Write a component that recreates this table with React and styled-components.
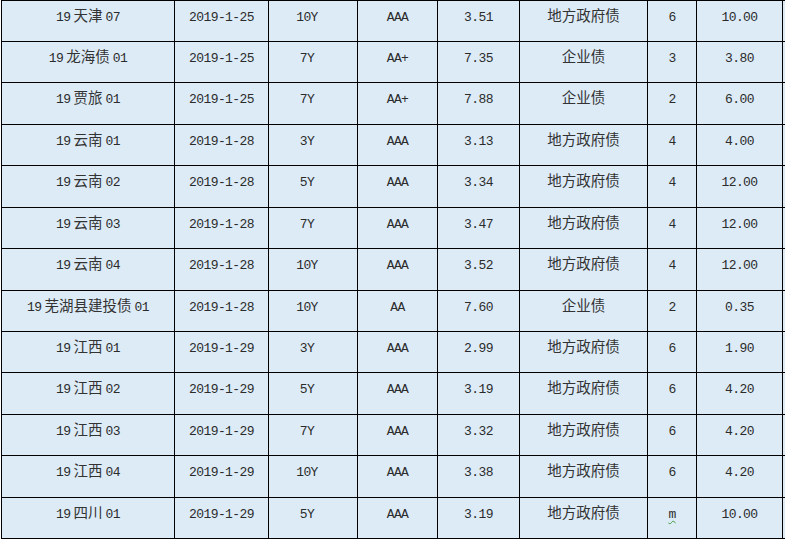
import React from "react";
import styled, { createGlobalStyle } from "styled-components";

const GlobalStyle = createGlobalStyle`
	html, body {
		margin: 0;
		padding: 0;
		background: #ffffff;
		overflow: hidden;
	}
`;

// column widths measured from the rule lines
const COLS = "173px 94px 89px 80px 82px 128px 49px 86px 1fr";

const Sheet = styled.div`
	margin: -0.5px 0 0 1px;
	width: calc(100% - 1px);
	border-top: 1px solid #000;
	background: #ddebf7;
	color: #333;
`;

const Row = styled.div`
	display: grid;
	grid-template-columns: ${COLS};
	height: 41.45px;
	box-sizing: border-box;
	border-bottom: 1px solid #000;
`;

const Cell = styled.div`
	box-sizing: border-box;
	border-left: 1px solid #000;
	padding: 5px ${(p) => p.$shift || 0}px 0 0;
	font-family: "Noto Sans CJK SC", sans-serif;
	font-size: 14.5px;
	line-height: 17px;
	text-align: center;
	white-space: nowrap;
	overflow: hidden;

	& > span + span {
		margin-left: 3px;
	}
`;

// SimSun-like half-width latin: taller glyphs on a 7.2px advance
const Latin = styled.span`
	font-family: "Liberation Mono", monospace;
	font-size: 13px;
	letter-spacing: -0.6px;
	color: #2b2b2b;
`;

const Han = styled.span`
	font-size: 14.5px;
`;

const Flagged = styled(Latin)`
	text-decoration: underline wavy #3c9a3c;
	text-decoration-thickness: 1px;
	text-underline-offset: 2px;
`;

const rows = [
	["19 天津 07", "2019-1-25", "10Y", "AAA", "3.51", "地方政府债", "6", "10.00"],
	["19 龙海债 01", "2019-1-25", "7Y", "AA+", "7.35", "企业债", "3", "3.80"],
	["19 贾旅 01", "2019-1-25", "7Y", "AA+", "7.88", "企业债", "2", "6.00"],
	["19 云南 01", "2019-1-28", "3Y", "AAA", "3.13", "地方政府债", "4", "4.00"],
	["19 云南 02", "2019-1-28", "5Y", "AAA", "3.34", "地方政府债", "4", "12.00"],
	["19 云南 03", "2019-1-28", "7Y", "AAA", "3.47", "地方政府债", "4", "12.00"],
	["19 云南 04", "2019-1-28", "10Y", "AAA", "3.52", "地方政府债", "4", "12.00"],
	["19 芜湖县建投债 01", "2019-1-28", "10Y", "AA", "7.60", "企业债", "2", "0.35"],
	["19 江西 01", "2019-1-29", "3Y", "AAA", "2.99", "地方政府债", "6", "1.90"],
	["19 江西 02", "2019-1-29", "5Y", "AAA", "3.19", "地方政府债", "6", "4.20"],
	["19 江西 03", "2019-1-29", "7Y", "AAA", "3.32", "地方政府债", "6", "4.20"],
	["19 江西 04", "2019-1-29", "10Y", "AAA", "3.38", "地方政府债", "6", "4.20"],
	["19 四川 01", "2019-1-29", "5Y", "AAA", "3.19", "地方政府债", "m", "10.00"],
];

// split a value into latin and chinese runs so each gets its own font
const renderMixed = (text) =>
	text
		.split(" ")
		.filter(Boolean)
		.flatMap((word) => word.split(/([\u4e00-\u9fff]+)/).filter(Boolean))
		.map((part, i) =>
			/[\u4e00-\u9fff]/.test(part) ? (
				<Han key={i}>{part}</Han>
			) : (
				<Latin key={i}>{part}</Latin>
			)
		);

const App = () => {
	return (
		<>
			<GlobalStyle />
			<Sheet>
				{rows.map((row, r) => (
					<Row key={r}>
						{row.map((value, c) => (
							<Cell key={c} $shift={c === 2 ? 12 : 0}>
								{value === "m" ? <Flagged>m</Flagged> : renderMixed(value)}
							</Cell>
						))}
						<Cell />
					</Row>
				))}
			</Sheet>
		</>
	);
};

export default App;
